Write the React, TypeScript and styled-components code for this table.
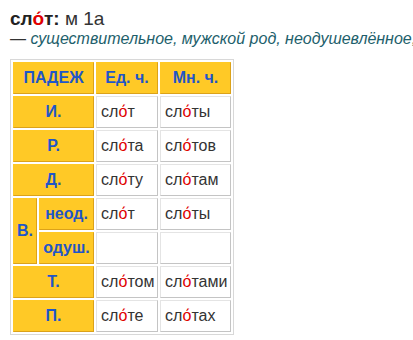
import React from 'react';
import styled, { createGlobalStyle } from 'styled-components';

const GlobalStyle = createGlobalStyle`
	body {
		margin: 0;
		background: #fff;
		font-family: 'Liberation Sans', Arial, sans-serif;
		color: #333;
	}
`;

type Form = { label: string; sub?: string; sg: string[]; pl: string[] };

const forms: Form[] = [
	{ label: 'И.', sg: ['сл', 'т'], pl: ['сл', 'ты'] },
	{ label: 'Р.', sg: ['сл', 'та'], pl: ['сл', 'тов'] },
	{ label: 'Д.', sg: ['сл', 'ту'], pl: ['сл', 'там'] },
	{ label: 'В.', sub: 'неод.', sg: ['сл', 'т'], pl: ['сл', 'ты'] },
	{ label: 'В.', sub: 'одуш.', sg: [], pl: [] },
	{ label: 'Т.', sg: ['сл', 'том'], pl: ['сл', 'тами'] },
	{ label: 'П.', sg: ['сл', 'те'], pl: ['сл', 'тах'] },
];

function Word({ parts }: { parts: string[] }) {
	if (!parts.length) return null;
	return (
		<>
			{parts[0]}
			<Stress>о́</Stress>
			{parts[1]}
		</>
	);
}

export default function App() {
	return (
		<Page>
			<GlobalStyle />
			<Title>
				<b>
					сл<Stress>о́</Stress>т:
				</b>{' '}
				м 1a
			</Title>
			<Grammar>
				— <i>существительное, мужской род, неодушевлённое,</i>
			</Grammar>

			<Table>
				<colgroup>
					<col style={{ width: 24 }} />
					<col style={{ width: 55 }} />
					<col style={{ width: 62 }} />
					<col style={{ width: 71 }} />
				</colgroup>
				<tbody>
					<tr>
						<Head colSpan={2}>ПАДЕЖ</Head>
						<Head>Ед. ч.</Head>
						<Head>Мн. ч.</Head>
					</tr>
					{forms.map((f, i) => {
						if (f.sub) {
							return (
								<tr key={f.sub}>
									{f.sub === 'неод.' && <Head rowSpan={2}>{f.label}</Head>}
									<Head>{f.sub}</Head>
									<Cell>
										<Word parts={f.sg} />
									</Cell>
									<Cell>
										<Word parts={f.pl} />
									</Cell>
								</tr>
							);
						}
						return (
							<tr key={i}>
								<Head colSpan={2}>{f.label}</Head>
								<Cell>
									<Word parts={f.sg} />
								</Cell>
								<Cell>
									<Word parts={f.pl} />
								</Cell>
							</tr>
						);
					})}
				</tbody>
			</Table>
		</Page>
	);
}

const Page = styled.div`
	padding: 9px 10px 0;
	white-space: nowrap;
	overflow: hidden;
`;

const Title = styled.div`
	font-size: 19px;
	line-height: 20px;
	color: #333;

	b {
		color: #222;
	}
`;

const Grammar = styled.div`
	font-size: 16px;
	line-height: 20px;
	color: #333;
	margin-bottom: 10px;

	i {
		color: #1e5f6c;
	}
`;

const Stress = styled.span`
	color: #e00000;
`;

const Table = styled.table`
	table-layout: fixed;
	border-collapse: separate;
	border-spacing: 2px;
	border: 1px solid #d8d8d8;
	width: 224px;
`;

const Head = styled.th`
	height: 32px;
	box-sizing: border-box;
	padding: 0 2px;
	background: #ffc926;
	border: 1px solid;
	border-color: #ffc926 #dba21a #dba21a #ffc926;
	color: #1f56c8;
	font-size: 16px;
	font-weight: bold;
	text-align: center;
`;

const Cell = styled.td`
	height: 32px;
	box-sizing: border-box;
	padding: 0 4px;
	border: 1px solid;
	border-color: #e4e4e4 #c4c4c4 #c4c4c4 #e4e4e4;
	color: #333;
	font-size: 16px;
	text-align: left;
`;
